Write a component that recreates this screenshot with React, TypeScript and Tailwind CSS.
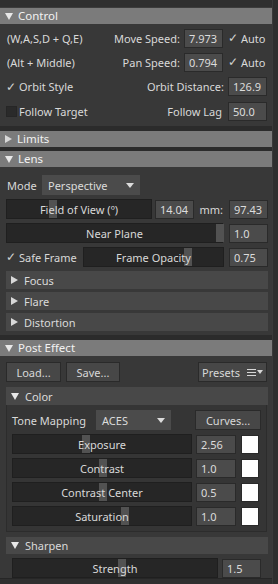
import React from 'react';

const TriDown = () => (
  <svg width="8" height="7" viewBox="0 0 8 7" className="shrink-0">
    <path d="M0 0 L8 0 L4 7 Z" fill="#e8e8e8" />
  </svg>
);

const TriRight = () => (
  <svg width="7" height="8" viewBox="0 0 7 8" className="shrink-0">
    <path d="M0 0 L7 4 L0 8 Z" fill="#d8d8d8" />
  </svg>
);

const Header = ({ title, open }: { title: string; open?: boolean }) => (
  <div className="h-[16px] bg-[#7b7b7b] flex items-center gap-[5px] pl-[5px] text-[#f2f2f2] text-[11.5px] mr-[-2px]">
    {open ? <TriDown /> : <TriRight />}
    <span>{title}</span>
  </div>
);

const SubHeader = ({ title, open, h = 'h-[18px]' }: { title: string; open?: boolean; h?: string }) => (
  <div className={`${h} bg-[#484848] flex items-center gap-[6px] pl-[5px] text-[#dadada]`}>
    {open ? <TriDown /> : <TriRight />}
    <span>{title}</span>
  </div>
);

const Field = ({ value, w = 'w-[39px]' }: { value: string; w?: string }) => (
  <div className={`${w} h-[19px] bg-[#4b4b4b] border border-[#2a2a2a] flex items-center pl-[4px] text-[#dcdcdc] shrink-0`}>
    {value}
  </div>
);

const Check = ({ checked, label }: { checked?: boolean; label: string }) => (
  <div className="flex items-center gap-[2px]">
    {checked ? (
      <span className="w-[11px] text-[#d0d0d0] text-[12px] leading-none">✓</span>
    ) : (
      <span className="w-[11px] h-[11px] bg-[#2a2a2a] border border-[#262626]" />
    )}
    <span>{label}</span>
  </div>
);

const Slider = ({
  label,
  handle,
  className,
}: {
  label: string;
  handle: number;
  className: string;
}) => (
  <div className={`relative h-[20px] bg-[#262626] border border-[#1f1f1f] flex items-center justify-center text-[#d8d8d8] ${className}`}>
    <div className="absolute top-0 bottom-0 w-[8px] bg-[#525252]" style={{ left: handle }} />
    <span className="relative">{label}</span>
  </div>
);

const Button = ({ children, className }: { children: React.ReactNode; className: string }) => (
  <div className={`h-[20px] bg-[#474747] border border-[#2a2a2a] flex items-center justify-center text-[#d8d8d8] ${className}`}>
    {children}
  </div>
);

const Dropdown = ({ value, className }: { value: string; className: string }) => (
  <div className={`h-[20px] bg-[#4b4b4b] flex items-center justify-between pl-[6px] pr-[6px] text-[#dcdcdc] ${className}`}>
    <span>{value}</span>
    <svg width="8" height="5" viewBox="0 0 8 5">
      <path d="M0 0 L8 0 L4 5 Z" fill="#dcdcdc" />
    </svg>
  </div>
);

export default function App() {
  return (
    <div className="w-[278px] h-[584px] overflow-hidden bg-[#2b2b2b] flex font-['Noto_Sans',sans-serif] text-[11px] text-[#d9d9d9] leading-none">
      <div className="w-[272px] flex flex-col">
        <div className="h-[8px] shrink-0 bg-[#2f2f2f] border-b border-[#3c3c3c]" />

        {/* Control */}
        <Header title="Control" open />
        <div className="bg-[#383838] pt-[5px] pb-[6px] pl-[6px] pr-[5px] flex flex-col gap-[6px]">
          <div className="flex items-center h-[18px]">
            <span className="pl-[1px]">(W,A,S,D + Q,E)</span>
            <span className="ml-auto mr-[4px]">Move Speed:</span>
            <Field value="7.973" />
            <div className="ml-[5px] w-[39px]">
              <Check checked label="Auto" />
            </div>
          </div>
          <div className="flex items-center h-[18px]">
            <span className="pl-[1px]">(Alt + Middle)</span>
            <span className="ml-auto mr-[4px]">Pan Speed:</span>
            <Field value="0.794" />
            <div className="ml-[5px] w-[39px]">
              <Check checked label="Auto" />
            </div>
          </div>
          <div className="flex items-center h-[19px]">
            <Check checked label="Orbit Style" />
            <span className="ml-auto mr-[4px]">Orbit Distance:</span>
            <Field value="126.9" />
          </div>
          <div className="flex items-center h-[18px]">
            <Check label="Follow Target" />
            <span className="ml-auto mr-[6px]">Follow Lag</span>
            <Field value="50.0" />
          </div>
        </div>

        <div className="h-[5px] shrink-0" />
        <Header title="Limits" />
        <div className="h-[4px] shrink-0" />

        {/* Lens */}
        <Header title="Lens" open />
        <div className="bg-[#383838] pt-[8px] pb-[4px] pl-[6px] pr-[4px] flex flex-col gap-[4px]">
          <div className="flex items-center h-[20px]">
            <span className="pl-[1px] w-[36px]">Mode</span>
            <Dropdown value="Perspective" className="w-[98px]" />
          </div>
          <div className="flex items-center h-[20px]">
            <Slider label="Field of View (º)" handle={42} className="w-[146px]" />
            <div className="ml-[3px]">
              <Field value="14.04" />
            </div>
            <span className="ml-auto mr-[6px]">mm:</span>
            <Field value="97.43" />
          </div>
          <div className="flex items-center h-[20px]">
            <Slider label="Near Plane" handle={209} className="w-[217px]" />
            <div className="ml-auto">
              <Field value="1.0" />
            </div>
          </div>
          <div className="flex items-center h-[20px]">
            <Check checked label="Safe Frame" />
            <Slider label="Frame Opacity" handle={100} className="w-[141px] ml-auto" />
            <div className="ml-[5px]">
              <Field value="0.75" />
            </div>
          </div>
          <div className="flex flex-col gap-[3px]">
            <SubHeader title="Focus" />
            <SubHeader title="Flare" />
            <SubHeader title="Distortion" />
          </div>
        </div>

        <div className="h-[5px] shrink-0" />

        {/* Post Effect */}
        <Header title="Post Effect" open />
        <div className="bg-[#383838] pt-[6px] pl-[6px] pr-[4px] flex flex-col">
          <div className="flex items-center h-[20px]">
            <Button className="w-[55px]">Load...</Button>
            <Button className="w-[54px] ml-[5px]">Save...</Button>
            <Button className="w-[69px] ml-auto mr-[1px] gap-[7px]">
              <span>Presets</span>
              <span className="flex items-center gap-[1px]">
                <svg width="9" height="7" viewBox="0 0 9 7">
                  <path d="M0 0.5H9M0 3.5H9M0 6.5H9" stroke="#d8d8d8" strokeWidth="1" />
                </svg>
                <svg width="6" height="4" viewBox="0 0 6 4">
                  <path d="M0 0 L6 0 L3 4 Z" fill="#d8d8d8" />
                </svg>
              </span>
            </Button>
          </div>

          <div className="mt-[5px]">
            <SubHeader title="Color" open />
          </div>
          <div className="border border-t-0 border-[#2c2c2c] bg-[#353535] mr-[1px] pt-[5px] pb-[5px] pl-[5px] pr-[5px] flex flex-col gap-[4px]">
            <div className="flex items-center h-[20px]">
              <span className="w-[84px]">Tone Mapping</span>
              <Dropdown value="ACES" className="w-[75px]" />
              <Button className="w-[66px] ml-auto">Curves...</Button>
            </div>
            {[
              ['Exposure', '2.56', 69],
              ['Contrast', '1.0', 86],
              ['Contrast Center', '0.5', 86],
              ['Saturation', '1.0', 108],
            ].map(([label, value, h]) => (
              <div key={label as string} className="flex items-center h-[20px]">
                <Slider label={label as string} handle={h as number} className="w-[180px]" />
                <div className="ml-[4px]">
                  <Field value={value as string} w="w-[40px]" />
                </div>
                <div className="ml-[5px] w-[18px] h-[19px] bg-white border border-[#2a2a2a]" />
              </div>
            ))}
          </div>

          <div className="mt-[5px]">
            <SubHeader title="Sharpen" open h="h-[17px]" />
          </div>
          <div className="pt-[4px] pl-[6px] flex items-center h-[24px]">
            <Slider label="Strength" handle={105} className="w-[206px]" />
            <div className="ml-[4px]">
              <Field value="1.5" />
            </div>
          </div>
        </div>
        <div className="flex-1 bg-[#2f2f2f] border-t border-[#262626]" />
      </div>
      <div className="w-[6px] bg-[#2e2e2e] border-l border-[#3a3a3a]" />
    </div>
  );
}
